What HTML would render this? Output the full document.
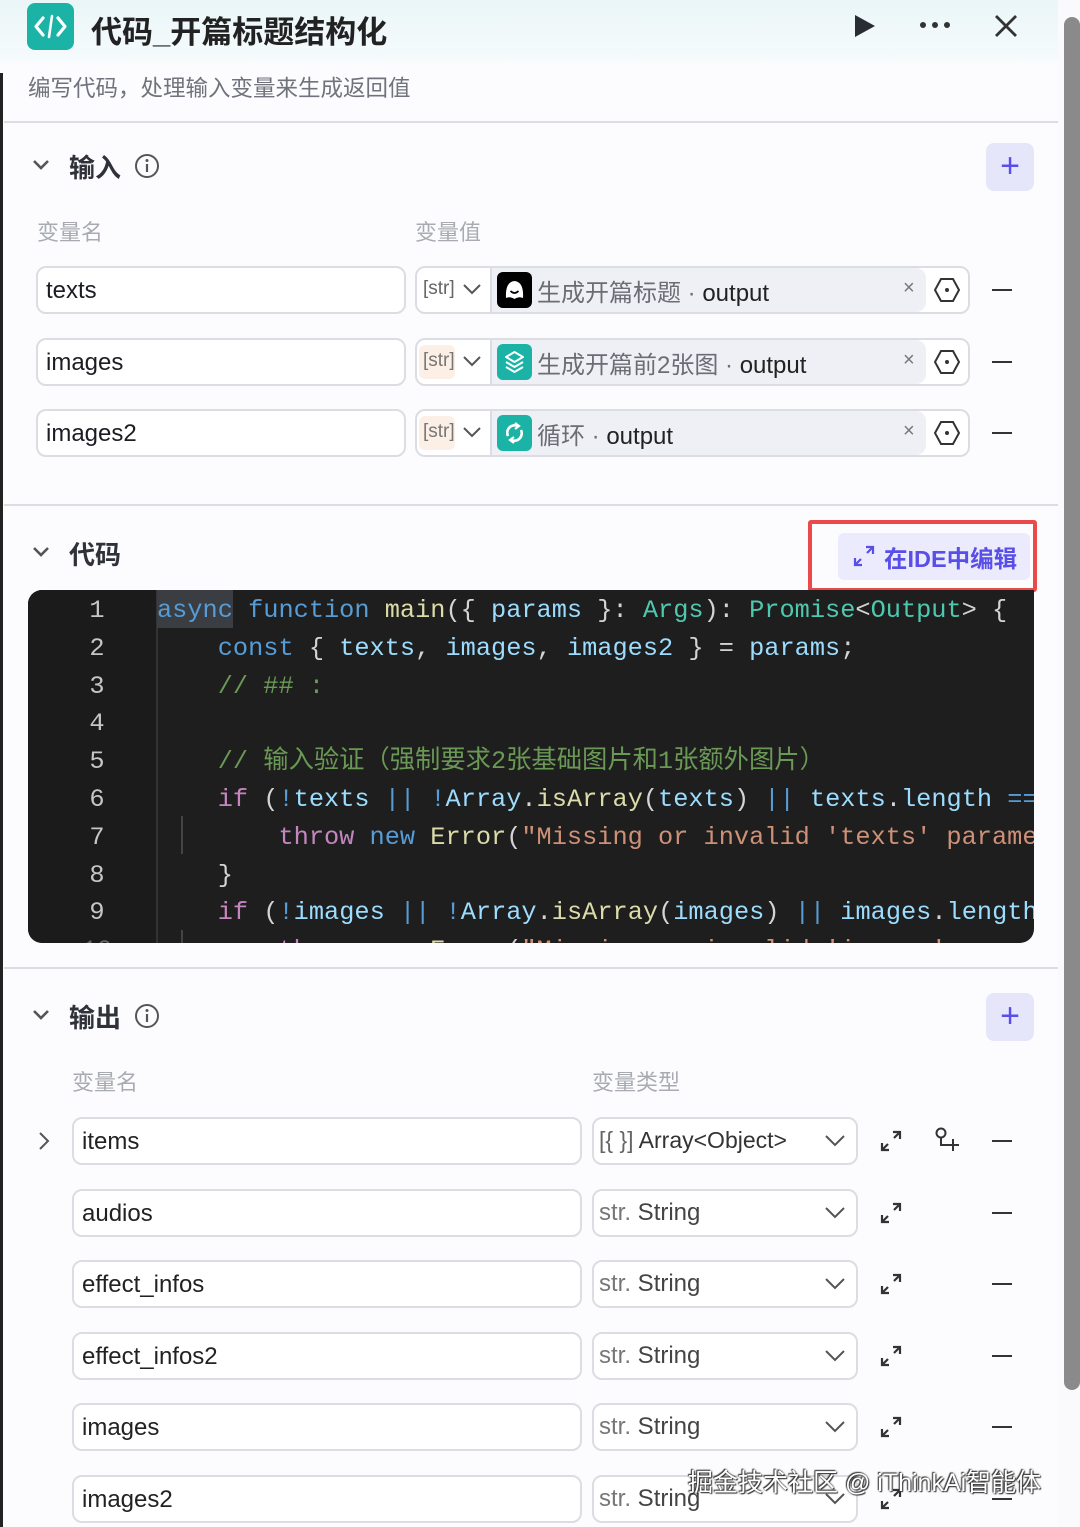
<!DOCTYPE html>
<html><head><meta charset="utf-8"><style>
*{box-sizing:border-box;margin:0;padding:0}
body{width:1080px;height:1527px;overflow:hidden;background:#fcfcfe;font-family:"Liberation Sans","Noto Sans CJK SC",sans-serif;position:relative;color:#1c1d23}
.a{position:absolute}
.hdr{left:0;top:0;width:1058px;height:62px;background:linear-gradient(#eaf6f8,#f6fbfc)}
.ln{height:2px;background:#dcdde2;left:4px;width:1054px}
.t{white-space:nowrap}
.box{border:2px solid #dcdde3;border-radius:10px;background:#fff;height:48px}
.lbl{font-size:22px;color:#a9abb2}
.sec{font-size:26px;font-weight:bold;color:#30323a}
.plus{width:48px;height:48px;border-radius:8px;background:#e6e6fb;color:#5a4ee8;font-size:34px;text-align:center;line-height:46px}
.code{font-family:"Liberation Mono","Noto Sans CJK SC",monospace;font-size:25.3px;line-height:37.8px;white-space:pre}
.kw{color:#c586c0}.bl{color:#569cd6}.vr{color:#9cdcfe}.fn{color:#dcdcaa}.ty{color:#4ec9b0}.cm{color:#6a9955}.st{color:#ce9178}.w{color:#d4d4d4}
.mn{width:20px;height:2px;background:#333}
</style></head><body>
<div class="a hdr"></div>
<div class="a" style="left:0;top:73px;width:3px;height:1454px;background:#222"></div>
<div class="a" style="left:1058px;top:0;width:22px;height:1527px;background:#fafafc"></div>
<div class="a" style="left:1064px;top:17px;width:16px;height:1373px;background:#8a8a8a;border-radius:8px"></div>
<div class="a" style="left:27px;top:3px;width:47px;height:47px;border-radius:8px;background:#1bb3a6"></div>
<svg class="a" style="left:27px;top:3px" width="47" height="47" viewBox="0 0 47 47"><path d="M16 15 L9 23.5 L16 32 M31 15 L38 23.5 L31 32" stroke="#fff" stroke-width="3.2" fill="none" stroke-linecap="round" stroke-linejoin="round"/><path d="M25 13 L22 34" stroke="#fff" stroke-width="2.6" stroke-linecap="round"/></svg>
<div class="a t" style="left:91px;top:7px;font-size:31px;font-weight:bold;color:#222">代码_开篇标题结构化</div>
<svg class="a" style="left:852px;top:14px" width="24" height="24"><path d="M3 1 L23 12 L3 23Z" fill="#2a2c33"/></svg>
<svg class="a" style="left:918px;top:20px" width="34" height="10"><circle cx="5" cy="5" r="3" fill="#333"/><circle cx="17" cy="5" r="3" fill="#333"/><circle cx="29" cy="5" r="3" fill="#333"/></svg>
<svg class="a" style="left:994px;top:14px" width="24" height="24"><path d="M2 2 L22 22 M22 2 L2 22" stroke="#333" stroke-width="2.8"/></svg>
<div class="a t" style="left:28px;top:71px;font-size:22.5px;color:#70737c">编写代码，处理输入变量来生成返回值</div>
<div class="a ln" style="top:121px"></div>

<svg class="a" style="left:32px;top:158px" width="18" height="14"><path d="M2 3 L9 10 L16 3" stroke="#555" stroke-width="2.6" fill="none"/></svg>
<div class="a t sec" style="left:69px;top:148px">输入</div>
<svg class="a" style="left:134px;top:153px" width="26" height="26"><circle cx="13" cy="13" r="11" stroke="#555" stroke-width="2" fill="none"/><path d="M13 11 V19" stroke="#555" stroke-width="2.2"/><circle cx="13" cy="7.5" r="1.5" fill="#555"/></svg>
<div class="a plus" style="left:986px;top:143px">+</div>
<div class="a t lbl" style="left:37px;top:215px">变量名</div>
<div class="a t lbl" style="left:415px;top:215px">变量值</div>

<div class="a box" style="left:36px;top:266px;width:370px"></div><div class="a t" style="left:46px;top:277px;font-size:24px">texts</div>
<div class="a box" style="left:36px;top:338px;width:370px"></div><div class="a t" style="left:46px;top:349px;font-size:24px">images</div>
<div class="a box" style="left:36px;top:409px;width:370px"></div><div class="a t" style="left:46px;top:420px;font-size:24px">images2</div>

<div class="a box" style="left:415px;top:266px;width:555px"></div>
<div class="a box" style="left:415px;top:338px;width:555px"></div>
<div class="a box" style="left:415px;top:409px;width:555px"></div>

<div class="a" style="left:490px;top:268px;width:436px;height:44px;background:#eff0f6;border-left:2px solid #dcdde3;border-radius:0 10px 10px 0"></div>
<div class="a" style="left:490px;top:340px;width:436px;height:44px;background:#eff0f6;border-left:2px solid #dcdde3;border-radius:0 10px 10px 0"></div>
<div class="a" style="left:490px;top:411px;width:436px;height:44px;background:#eff0f6;border-left:2px solid #dcdde3;border-radius:0 10px 10px 0"></div>

<div class="a t" style="left:423px;top:278px;font-size:19px;color:#666">[str]</div>
<div class="a" style="left:419px;top:345px;width:36px;height:34px;background:#fbefe6;border-radius:6px"></div>
<div class="a t" style="left:423px;top:350px;font-size:19px;color:#777">[str]</div>
<div class="a" style="left:419px;top:416px;width:36px;height:34px;background:#fbefe6;border-radius:6px"></div>
<div class="a t" style="left:423px;top:421px;font-size:19px;color:#777">[str]</div>
<svg class="a" style="left:462px;top:282px" width="20" height="14"><path d="M2 3 L10 11 L18 3" stroke="#555" stroke-width="2" fill="none"/></svg>
<svg class="a" style="left:462px;top:354px" width="20" height="14"><path d="M2 3 L10 11 L18 3" stroke="#555" stroke-width="2" fill="none"/></svg>
<svg class="a" style="left:462px;top:425px" width="20" height="14"><path d="M2 3 L10 11 L18 3" stroke="#555" stroke-width="2" fill="none"/></svg>

<div class="a" style="left:497px;top:272px;width:35px;height:36px;border-radius:6px;background:#000"></div>
<svg class="a" style="left:497px;top:272px" width="35" height="36"><path d="M9 26 Q8 10 17.5 9 Q27 10 26 26 Q22 24 17.5 27 Q13 24 9 26Z" fill="#fff"/><path d="M13.5 19 Q17.5 23 21.5 19" stroke="#000" stroke-width="1.6" fill="none"/></svg>
<div class="a" style="left:497px;top:344px;width:35px;height:36px;border-radius:6px;background:#1bb3a6"></div>
<svg class="a" style="left:497px;top:344px" width="35" height="36"><path d="M17.5 8 L26 13 L17.5 18 L9 13Z M9 18 L17.5 23 L26 18 M9 23 L17.5 28 L26 23" stroke="#fff" stroke-width="2" fill="none" stroke-linejoin="round"/></svg>
<div class="a" style="left:497px;top:415px;width:35px;height:36px;border-radius:6px;background:#1bb3a6"></div>
<svg class="a" style="left:497px;top:415px" width="35" height="36"><path d="M11 21 A7.5 7.5 0 0 1 21 11 M24 15 A7.5 7.5 0 0 1 14 25" stroke="#fff" stroke-width="2.6" fill="none"/><path d="M18 8 L22 11 L18 14 M17 22 L13 25 L17 28" stroke="#fff" stroke-width="2.2" fill="none"/></svg>

<div class="a t" style="left:537px;top:273px;font-size:24px;color:#6b6d75">生成开篇标题 · <span style="color:#222">output</span></div>
<div class="a t" style="left:537px;top:345px;font-size:24px;color:#6b6d75">生成开篇前2张图 · <span style="color:#222">output</span></div>
<div class="a t" style="left:537px;top:416px;font-size:24px;color:#6b6d75">循环 · <span style="color:#222">output</span></div>

<div class="a t" style="left:903px;top:277px;font-size:20px;color:#777">×</div>
<div class="a t" style="left:903px;top:349px;font-size:20px;color:#777">×</div>
<div class="a t" style="left:903px;top:420px;font-size:20px;color:#777">×</div>
<svg class="a" style="left:933px;top:276px" width="28" height="28"><path d="M8 3 H20 L26 14 L20 25 H8 L2 14Z" stroke="#333" stroke-width="2" fill="none"/><circle cx="14" cy="14" r="2" fill="#333"/></svg>
<svg class="a" style="left:933px;top:348px" width="28" height="28"><path d="M8 3 H20 L26 14 L20 25 H8 L2 14Z" stroke="#333" stroke-width="2" fill="none"/><circle cx="14" cy="14" r="2" fill="#333"/></svg>
<svg class="a" style="left:933px;top:419px" width="28" height="28"><path d="M8 3 H20 L26 14 L20 25 H8 L2 14Z" stroke="#333" stroke-width="2" fill="none"/><circle cx="14" cy="14" r="2" fill="#333"/></svg>
<div class="a mn" style="left:992px;top:289px"></div>
<div class="a mn" style="left:992px;top:361px"></div>
<div class="a mn" style="left:992px;top:432px"></div>

<div class="a ln" style="top:504px"></div>

<svg class="a" style="left:32px;top:545px" width="18" height="14"><path d="M2 3 L9 10 L16 3" stroke="#555" stroke-width="2.6" fill="none"/></svg>
<div class="a t sec" style="left:69px;top:535px">代码</div>
<div class="a" style="left:808px;top:520px;width:229px;height:72px;border:4px solid #ec4a4a;border-radius:3px"></div>
<div class="a" style="left:838px;top:533px;width:192px;height:47px;background:#ebebfd;border-radius:6px"></div>
<svg class="a" style="left:852px;top:544px" width="24" height="24"><path d="M14 3 H21 V10 M21 3 L15 9 M10 21 H3 V14 M3 21 L9 15" stroke="#5a4ee8" stroke-width="2.2" fill="none"/></svg>
<div class="a t" style="left:884px;top:540px;font-size:23.5px;font-weight:bold;color:#5a4ee8">在IDE中编辑</div>

<div class="a" style="left:28px;top:590px;width:1006px;height:353px;background:#1e1e1e;border-radius:14px 0 14px 14px;overflow:hidden">
 <div class="a" style="left:0;top:0;width:128px;height:353px;background:#1b1b1b"></div>
 <div class="a" style="left:128px;top:0;width:2px;height:353px;background:#333"></div>
 <div class="a" style="left:129px;top:0;width:76px;height:38px;background:#3a3d41"></div>
 <div class="a" style="left:153px;top:226px;width:2px;height:38px;background:#444"></div>
 <div class="a" style="left:153px;top:340px;width:2px;height:13px;background:#444"></div>
 <div class="a code" style="left:0;top:2px;width:138px;text-align:center;color:#c6c6c6">1
2
3
4
5
6
7
8
9
<span style="color:#666">10</span></div>
 <div class="a code" style="left:129px;top:2px"><span class="bl">async</span> <span class="bl">function</span> <span class="fn">main</span><span class="w">({ </span><span class="vr">params</span><span class="w"> }: </span><span class="ty">Args</span><span class="w">): </span><span class="ty">Promise</span><span class="w">&lt;</span><span class="ty">Output</span><span class="w">&gt; {</span>
    <span class="bl">const</span><span class="w"> { </span><span class="vr">texts</span><span class="w">, </span><span class="vr">images</span><span class="w">, </span><span class="vr">images2</span><span class="w"> } = </span><span class="vr">params</span><span class="w">;</span>
    <span class="cm">// ## :</span>

    <span class="cm">// 输入验证（强制要求2张基础图片和1张额外图片）</span>
    <span class="kw">if</span><span class="w"> (</span><span class="bl">!</span><span class="vr">texts</span><span class="w"> </span><span class="bl">||</span><span class="w"> </span><span class="bl">!</span><span class="vr">Array</span><span class="w">.</span><span class="fn">isArray</span><span class="w">(</span><span class="vr">texts</span><span class="w">) </span><span class="bl">||</span><span class="w"> </span><span class="vr">texts</span><span class="w">.</span><span class="vr">length</span><span class="w"> </span><span class="bl">===</span>
        <span class="kw">throw</span> <span class="bl">new</span> <span class="fn">Error</span><span class="w">(</span><span class="st">"Missing or invalid 'texts' parameter</span>
    <span class="w">}</span>
    <span class="kw">if</span><span class="w"> (</span><span class="bl">!</span><span class="vr">images</span><span class="w"> </span><span class="bl">||</span><span class="w"> </span><span class="bl">!</span><span class="vr">Array</span><span class="w">.</span><span class="fn">isArray</span><span class="w">(</span><span class="vr">images</span><span class="w">) </span><span class="bl">||</span><span class="w"> </span><span class="vr">images</span><span class="w">.</span><span class="vr">length</span>
        <span class="kw">throw</span> <span class="bl">new</span> <span class="fn">Error</span><span class="w">(</span><span class="st">"Missing or invalid 'images' param</span></div>
</div>

<div class="a ln" style="top:967px"></div>

<svg class="a" style="left:32px;top:1008px" width="18" height="14"><path d="M2 3 L9 10 L16 3" stroke="#555" stroke-width="2.6" fill="none"/></svg>
<div class="a t sec" style="left:69px;top:998px">输出</div>
<svg class="a" style="left:134px;top:1003px" width="26" height="26"><circle cx="13" cy="13" r="11" stroke="#555" stroke-width="2" fill="none"/><path d="M13 11 V19" stroke="#555" stroke-width="2.2"/><circle cx="13" cy="7.5" r="1.5" fill="#555"/></svg>
<div class="a plus" style="left:986px;top:993px">+</div>
<div class="a t lbl" style="left:72px;top:1065px">变量名</div>
<div class="a t lbl" style="left:592px;top:1065px">变量类型</div>
<svg class="a" style="left:36px;top:1130px" width="16" height="22"><path d="M4 3 L12 11 L4 19" stroke="#555" stroke-width="2" fill="none"/></svg>

<div id="rows"></div>
<script>
var names=["items","audios","effect_infos","effect_infos2","images","images2"];
var h="";
for(var i=0;i<6;i++){var c=1141+i*71.5;var t=c-24;
h+='<div class="a box" style="left:72px;top:'+t+'px;width:510px"></div>';
h+='<div class="a t" style="left:82px;top:'+(c-13)+'px;font-size:24px;color:#222">'+names[i]+'</div>';
h+='<div class="a box" style="left:592px;top:'+t+'px;width:266px"></div>';
h+= i==0?'<div class="a t" style="left:599px;top:'+(c-14)+'px;font-size:23px;color:#333"><span style="color:#666">[{ }]</span> Array&lt;Object&gt;</div>'
 :'<div class="a t" style="left:599px;top:'+(c-14)+'px;font-size:24px;color:#444"><span style="color:#777">str.</span> String</div>';
h+='<svg class="a" style="left:824px;top:'+(c-8)+'px" width="22" height="16"><path d="M2 3 L11 12 L20 3" stroke="#555" stroke-width="2" fill="none"/></svg>';
h+='<svg class="a" style="left:879px;top:'+(c-12)+'px" width="24" height="24"><path d="M14 3 H21 V10 M21 3 L15 9 M10 21 H3 V14 M3 21 L9 15" stroke="#333" stroke-width="2.2" fill="none"/></svg>';
h+='<div class="a mn" style="left:992px;top:'+(c-1)+'px"></div>';}
document.getElementById("rows").innerHTML=h;
</script>
<svg class="a" style="left:932px;top:1126px" width="30" height="30"><circle cx="9" cy="7" r="4.5" stroke="#333" stroke-width="2" fill="none"/><path d="M9 11.5 V19 H16 M21 13 V25 M15 19 H27" stroke="#333" stroke-width="2" fill="none"/></svg>

<div class="a t" style="left:688px;top:1463px;font-size:25px;color:#fff;text-shadow:0 0 2px #333,1px 1px 1px #333,-1px -1px 1px #333">掘金技术社区 @ iThinkAi智能体</div>
</body></html>
